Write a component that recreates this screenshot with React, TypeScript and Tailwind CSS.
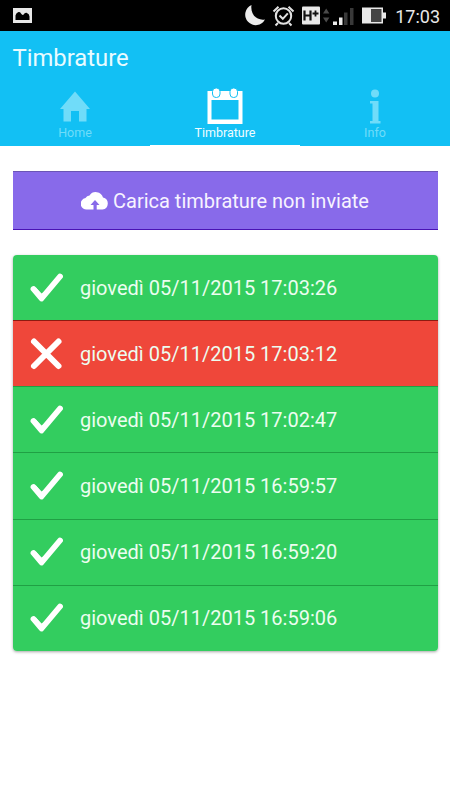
import React from "react";
import clsx from "clsx";

type Entry = {
  id: number;
  label: string;
  sent: boolean;
};

const entries: Entry[] = [
  { id: 1, label: "giovedì 05/11/2015 17:03:26", sent: true },
  { id: 2, label: "giovedì 05/11/2015 17:03:12", sent: false },
  { id: 3, label: "giovedì 05/11/2015 17:02:47", sent: true },
  { id: 4, label: "giovedì 05/11/2015 16:59:57", sent: true },
  { id: 5, label: "giovedì 05/11/2015 16:59:20", sent: true },
  { id: 6, label: "giovedì 05/11/2015 16:59:06", sent: true },
];

function StatusBar() {
  return (
    <div className="flex h-[31px] items-center justify-between bg-black pl-[13px] pr-[10px]">
      <svg width="19" height="15" viewBox="0 0 19 15">
        <rect width="19" height="15" fill="#e8e8e8" />
        <path
          d="M2.500 12V7.500Q3 5 5 4.200 7 3.600 8 5.500 9.200 7.500 10.700 6.600 11.500 4.500 13.500 4.800 16.500 6 16.500 8.500V12Z"
          fill="#000"
        />
      </svg>
      <div className="flex items-center">
        <svg width="144" height="31" viewBox="244 0 144 31">
          {/* moon */}
          <path
            d="M251.500 5A10.500 10.500 0 1 0 265 19.500C257 21 250 14.500 251.500 5Z"
            fill="#ececec"
          />
          {/* alarm */}
          <g fill="none" stroke="#e2e2e2">
            <circle cx="283.500" cy="16" r="7.700" strokeWidth="2" />
            <path d="M279.500 15.500l3.300 3.300 5-5.500" strokeWidth="2" />
            <path
              d="M273.500 11.500l5-4.800M293.500 11.500l-5-4.800M278 23l-2.500 2.500M289 23l2.500 2.500"
              strokeWidth="2"
            />
          </g>
          {/* network type */}
          <rect x="302" y="6.500" width="18" height="18" rx="1" fill="#e8e8e8" />
          <path
            d="M304.500 10.500v10M310.500 10.500v10M304.500 15.500h6"
            stroke="#111"
            strokeWidth="2.200"
            fill="none"
          />
          <path d="M312.500 13.500h6M315.500 10.500v6" stroke="#111" strokeWidth="1.800" />
          <path d="M323 13.500l3.200-5 3.200 5zM323 17.500l3.200 5 3.200-5z" fill="#4a4a4a" />
          {/* signal */}
          <path d="M333 21.500h4V25h-4zM339 17.500h3.500V25H339z" fill="#ececec" />
          <path d="M344 12.500h3.500V25H344zM350 8h3.500v17H350z" fill="#393939" />
          {/* battery */}
          <path d="M362 7.500h21v5h3v6h-3v5h-21z" fill="#e8e8e8" />
          <path d="M371 9h10.500v13H371z" fill="#444" />
        </svg>
        <span className="ml-[7px] pt-0.5 text-lg leading-[29px] text-[#e8e8e8]">17:03</span>
      </div>
    </div>
  );
}

function HomeIcon() {
  return (
    <svg width="36" height="36" viewBox="0 0 36 36" fill="currentColor">
      <path d="M18 3.500L33 21H29.500V33.500H22V23H14V33.500H6.500V21H3Z" />
    </svg>
  );
}

function CalendarIcon() {
  return (
    <svg width="36" height="36" viewBox="0 0 36 36">
      <path d="M0.500 3h35v33h-35zM4.500 12v19.500h27V12z" fill="#fff" fillRule="evenodd" />
      <rect x="5.500" y="0" width="7.500" height="9.500" rx="3.500" fill="#fff" stroke="#12c0f4" />
      <rect x="23" y="0" width="7.500" height="9.500" rx="3.500" fill="#fff" stroke="#12c0f4" />
    </svg>
  );
}

function InfoIcon() {
  return (
    <svg width="36" height="36" viewBox="0 0 36 36" fill="currentColor">
      <circle cx="18" cy="5.500" r="4" />
      <path d="M13 13h8.500V33H23.500v2.500H13V33h2.500V15.500H13Z" />
    </svg>
  );
}

const tabs = [
  { name: "Home", icon: <HomeIcon />, active: false },
  { name: "Timbrature", icon: <CalendarIcon />, active: true },
  { name: "Info", icon: <InfoIcon />, active: false },
];

function CheckIcon() {
  return (
    <svg width="36" height="34" viewBox="0 0 36 34" fill="none">
      <path
        d="M5.500 18L13.500 27.500L32 5.500"
        stroke="#fff"
        strokeWidth="5.800"
        strokeLinecap="round"
        strokeLinejoin="round"
      />
      <path d="M7.500 16L13.500 22.500L18 20L14 29L7 22Z" fill="#fff" />
    </svg>
  );
}

function CrossIcon() {
  return (
    <svg width="36" height="34" viewBox="0 0 36 34" fill="none">
      <path
        d="M6 4.500L30.500 29M30.500 4.500L6 29"
        stroke="#fff"
        strokeWidth="6"
        strokeLinecap="round"
      />
    </svg>
  );
}

export default function App() {
  return (
    <div className="h-[800px] w-[450px] overflow-hidden bg-white font-['Roboto',sans-serif]">
      <StatusBar />
      <header className="h-[115px] bg-[#12c0f4]">
        <h1 className="h-[57px] pl-[12.500px] pt-[11px] text-[23.800px] leading-8 text-[#e9fbff]">
          Timbrature
        </h1>
        <nav className="grid h-[58px] grid-cols-3">
          {tabs.map((tab) => (
            <div
              key={tab.name}
              className={clsx(
                "flex flex-col items-center border-b",
                tab.active
                  ? "border-white text-[#effcff]"
                  : "border-[#12c0f4] text-[#70dcf9]"
              )}
            >
              {tab.icon}
              <span className="text-[12.500px] leading-[18px]">{tab.name}</span>
            </div>
          ))}
        </nav>
      </header>

      <main className="px-[12.500px] pt-[25px]">
        <button className="flex h-[59px] w-[425px] items-center justify-center border-b border-t border-b-[#4a12b5] border-t-[#6b55b5] bg-[#886aea] text-xl text-[#f7f3ff]">
          <svg width="28" height="20" viewBox="0 0 28 20" className="mr-1">
            <path
              d="M6.500 18.500A5.700 5.700 0 0 1 4.500 7 5 5 0 0 1 8.500 4.500 7.500 7.500 0 0 1 22 6.500 6.100 6.100 0 0 1 21.500 18.500H15.700V14H18.500L14 9 9.500 14H12.500V18.500Z"
              fill="#fff"
            />
          </svg>
          Carica timbrature non inviate
        </button>

        <ul className="mt-[25px] w-[425px] overflow-hidden rounded-sm shadow-[0_1px_3px_rgba(0,0,0,0.35)]">
          {entries.map((entry, i) => (
            <li
              key={entry.id}
              className={clsx(
                "flex items-center pl-[15.500px] text-xl text-[#ecfdf0]",
                i === 0 ? "h-[65px]" : "h-[66.200px] border-t",
                entry.sent
                  ? "border-[#20a044] bg-[#33cd5f]"
                  : "border-[#8c1a10] bg-[#ef473a]"
              )}
            >
              {entry.sent ? <CheckIcon /> : <CrossIcon />}
              <span className="ml-4">{entry.label}</span>
            </li>
          ))}
        </ul>
      </main>
    </div>
  );
}
